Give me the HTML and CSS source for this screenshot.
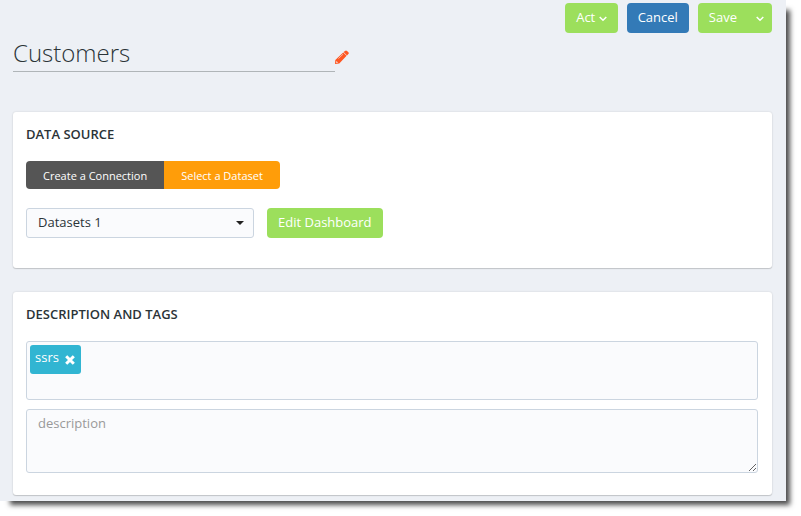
FILE: index.html
```html
<!DOCTYPE html>
<html lang="en">
<head>
  <meta charset="UTF-8" />
  <meta name="viewport" content="width=device-width, initial-scale=1.0"/>
  <title>Customers</title>
  <link rel="stylesheet" href="styles.css">
</head>
<body>
  <main class="page">
    <div class="toolbar">
      <button class="btn btn-green" type="button">Act
        <svg class="chevron" viewBox="0 0 8 6" aria-hidden="true"><path d="M.7 1L4 4.2 7.3 1"/></svg>
      </button>
      <button class="btn btn-blue" type="button">Cancel</button>
      <div class="btn-group">
        <button class="btn btn-green" type="button">Save</button>
        <button class="btn btn-green btn-caret" type="button" aria-label="More save options">
          <svg class="chevron" viewBox="0 0 8 6" aria-hidden="true"><path d="M.7 1L4 4.2 7.3 1"/></svg>
        </button>
      </div>
    </div>

    <div class="title-row">
      <input class="title-input" type="text" value="Customers" aria-label="Name">
      <button class="icon-btn" type="button" aria-label="Edit name">
        <svg class="pencil" viewBox="0 0 14 14" aria-hidden="true">
          <path fill="#ff5722" d="M10 .9Q11 0 12 .9L13.4 2.3Q14.2 3.2 13.3 4.1L12 5.4 8.6 2zM8.2 2.4L11.6 5.8 4.3 13.4 0 14 .3 9.9z"/>
          <path fill="none" stroke="#edf0f5" stroke-width=".6" d="M3.4 8.6L8 4.2"/>
          <path fill="#edf0f5" d="M1.4 11L3 12.6 1.6 12.9 1.2 12.5z"/>
        </svg>
      </button>
    </div>

    <section class="card source-card">
      <h2>DATA SOURCE</h2>
      <div class="btn-group tabs">
        <button class="tab" type="button">Create a Connection</button>
        <button class="tab active" type="button">Select a Dataset</button>
      </div>
      <div class="dataset-row">
        <div class="select-wrap">
          <select class="field" aria-label="Dataset">
            <option>Datasets 1</option>
          </select>
        </div>
        <button class="btn btn-green" type="button">Edit Dashboard</button>
      </div>
    </section>

    <section class="card">
      <h2>DESCRIPTION AND TAGS</h2>
      <div class="field tags">
        <span class="tag">ssrs
          <button class="icon-btn" type="button" aria-label="Remove ssrs">
            <svg class="remove" viewBox="0 0 10 10" aria-hidden="true"><path d="M1.2 1.2l7.6 7.6M8.8 1.2L1.2 8.8"/></svg>
          </button>
        </span>
      </div>
      <textarea class="field description" placeholder="description" aria-label="Description"></textarea>
    </section>
  </main>
</body>
</html>
```

FILE: styles.css
```css
* {
  box-sizing: border-box;
}

body {
  margin: 0;
  padding: 0 15px 15px 0;
  background-color: #fff;
  color: #2b3438;
  font-family: "Open Sans", sans-serif;
  font-size: 13px;
}

button, input, select, textarea {
  font: inherit;
}

button {
  border: none;
  cursor: pointer;
}

.page {
  padding: 3px 14px 6px 13px;
  background-color: #edf0f5;
  box-shadow: 7px 7px 5px -3px rgba(0, 0, 0, 0.7);
}

/* === Buttons === */
.toolbar {
  display: flex;
  justify-content: flex-end;
  gap: 9px;
}

.btn {
  height: 30px;
  padding: 0 11px 2px;
  border-radius: 4px;
  color: white;
  white-space: nowrap;
}

.btn-green {
  background-color: #9cdf5c;
}

.btn-blue {
  background-color: #337ab7;
}

.btn-group {
  display: flex;
}

.btn-group button:first-child {
  border-top-right-radius: 0;
  border-bottom-right-radius: 0;
}

.btn-group button:last-child {
  border-top-left-radius: 0;
  border-bottom-left-radius: 0;
}

.btn-caret {
  padding: 0 8px 2px;
}

.chevron {
  width: 8px;
  height: 6px;
  fill: none;
  stroke: white;
  stroke-width: 1.5;
}

.icon-btn {
  display: inline-flex;
  padding: 0;
  background: none;
}

/* === Title === */
.title-row {
  display: flex;
  align-items: flex-end;
  margin-bottom: 40px;
}

.title-input {
  width: 322px;
  height: 39px;
  padding: 0;
  border: none;
  border-bottom: 1px solid #b0b5b8;
  background: none;
  color: #2b3438;
  font-size: 24px;
  font-weight: 300;
}

.title-row .icon-btn {
  padding-bottom: 8px;
}

.pencil {
  width: 14px;
  height: 14px;
}

/* === Cards === */
.card {
  margin-bottom: 24px;
  padding: 13px 14px 22px 13px;
  border-radius: 3px;
  background-color: white;
  box-shadow: 0 0 2px rgba(0, 0, 0, 0.15), 0 1px 1px rgba(0, 0, 0, 0.15);
}

.card:last-child {
  margin-bottom: 0;
}

.source-card {
  padding-bottom: 30px;
}

h2 {
  margin: 0 0 18px;
  font-size: 13px;
  line-height: 18px;
  font-weight: 600;
}

.tab {
  height: 28px;
  padding: 0 17px;
  border-radius: 4px;
  background-color: #555;
  color: white;
  font-size: 11px;
}

.tab.active {
  background-color: #ff9d09;
}

.dataset-row {
  display: flex;
  gap: 13px;
  margin-top: 19px;
}

.field {
  display: block;
  width: 100%;
  border: 1px solid #cbd5e0;
  border-radius: 3px;
  background-color: #fafbfd;
  color: #2b3438;
}

.select-wrap {
  position: relative;
  width: 228px;
}

.select-wrap select {
  height: 30px;
  padding: 0 28px 2px 11px;
  appearance: none;
}

.select-wrap::after {
  content: "";
  position: absolute;
  top: 13px;
  right: 10px;
  border: 4px solid transparent;
  border-top-color: #222;
  border-bottom: none;
  pointer-events: none;
}

.tags {
  min-height: 59px;
  padding: 3px;
}

.tag {
  display: inline-flex;
  align-items: center;
  gap: 6px;
  height: 29px;
  padding: 0 6px 5px 5px;
  border-radius: 3px;
  background-color: #31b5d2;
  color: white;
}

.tag .icon-btn {
  padding-top: 5px;
}

.remove {
  width: 10px;
  height: 10px;
  stroke: white;
  stroke-width: 3;
}

.description {
  height: 64px;
  margin-top: 9px;
  padding: 4px 11px;
  resize: both;
}

.description::placeholder {
  color: #999;
}
```
